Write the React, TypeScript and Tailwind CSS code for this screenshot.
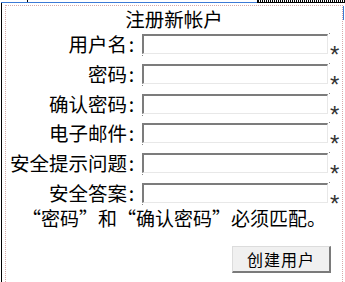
import React from "react";

const labels = ["用户名", "密码", "确认密码", "电子邮件", "安全提示问题", "安全答案"];

function Row({ label }: { label: string }) {
  return (
    <div className="flex h-[20px] items-center">
      <div className="flex w-[130px] shrink-0 justify-end text-[19.5px] leading-[20px] text-black whitespace-nowrap">
        <span>{label}</span>
        <span className="inline-block w-[9px] text-center">:</span>
      </div>
      <div className="relative ml-[6px] h-[20px] w-[186px] shrink-0">
        <input
          type="text"
          className="block h-[20px] w-[186px] border-solid border-t-2 border-l-2 border-b border-r border-t-[#7c7c7c] border-l-[#7c7c7c] border-b-[#e8e8e8] border-r-[#e8e8e8] bg-white outline-none"
        />
        <span className="absolute left-0 top-[21px] h-px w-px bg-[#8a8a8a]" />
        <span className="absolute right-[-2px] top-[-1px] h-px w-px bg-[#8a8a8a]" />
      </div>
      <span className="ml-[2px] mt-[9px] self-start text-[24px] leading-none text-[#333] font-['Liberation_Sans',sans-serif]">*</span>
    </div>
  );
}

export default function App() {
  return (
    <div className="relative h-[282px] w-[345px] overflow-hidden bg-white font-['Noto_Sans_CJK_SC','Noto_Sans',sans-serif]">
      {/* designer chrome */}
      <div className="absolute left-[1px] top-[2px] bottom-0 w-px bg-black" />
      <div className="absolute left-[1px] top-[2px] h-px w-[256px] bg-[#3b7ad6]" />
      <div className="absolute left-[27px] top-0 h-[2px] w-px bg-black" />
      <div className="absolute left-[257px] top-0 h-[3px] w-[88px] border-l border-b border-black bg-[repeating-linear-gradient(90deg,#000_0_1px,#fff_1px_2px)]" />
      <div className="absolute left-[343px] top-[6px] h-[14px] w-px bg-[#3b7ad6]" />

      <div className="pl-[5px] pt-[5px]">
        <div className="h-[277px] w-[338px] border-l border-t border-r border-dotted border-[#d6a9a9]">
          <div className="flex h-[28px] justify-center text-[19.5px] leading-[25px] text-black">注册新帐户</div>
          <div className="flex flex-col gap-[9.8px]">
            {labels.map((l) => (
              <Row key={l} label={l} />
            ))}
          </div>
          <div className="mt-[3px] text-center text-[19px] leading-[24px] text-black whitespace-nowrap">“密码”和“确认密码”必须匹配。</div>
          <div className="mt-[16px] flex justify-end pr-[11px]">
            <button className="h-[27px] w-[99px] border-solid border-t border-l border-b-2 border-r-2 border-t-[#dcdcdc] border-l-[#dcdcdc] border-b-[#7a7a7a] border-r-[#7a7a7a] bg-[#f0f0f0] text-[16px] leading-none tracking-[1px] text-black">
              创建用户
            </button>
          </div>
        </div>
      </div>
    </div>
  );
}
